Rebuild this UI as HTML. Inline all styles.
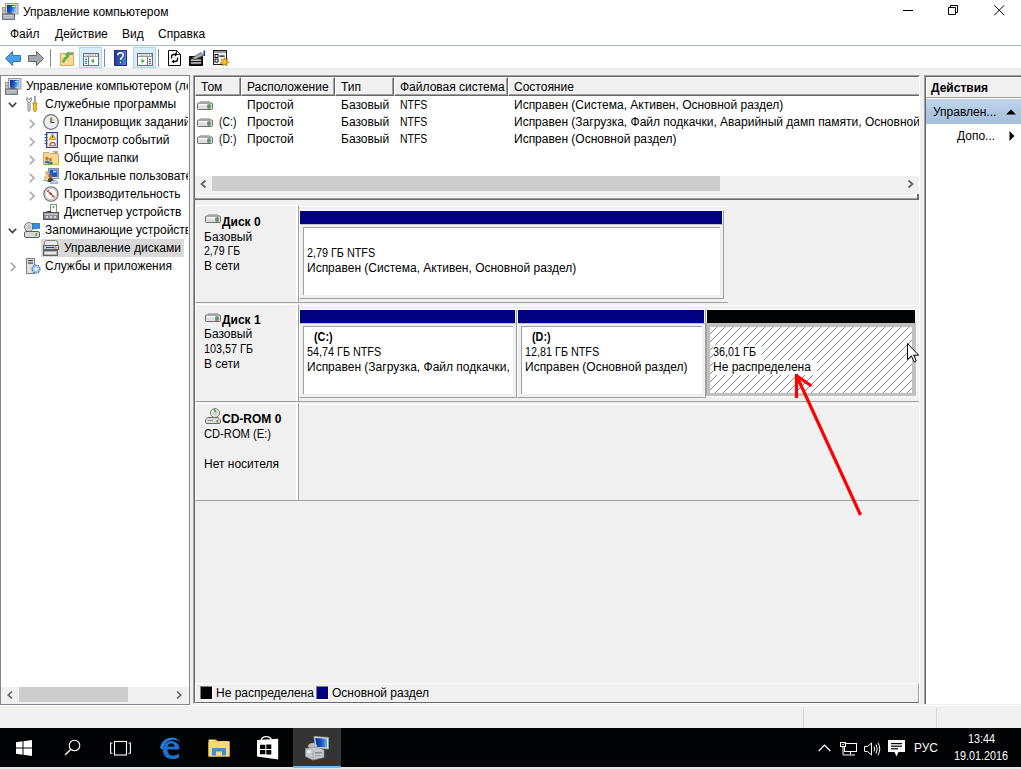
<!DOCTYPE html>
<html><head><meta charset="utf-8">
<style>
*{margin:0;padding:0;box-sizing:border-box}
html,body{width:1021px;height:769px;overflow:hidden;background:#f0f0f0;font-family:"Liberation Sans",sans-serif;font-size:12px;color:#000}
.a{position:absolute}
.t{position:absolute;white-space:nowrap;line-height:14px}
.b{font-weight:bold}
.n{transform:scaleX(0.9);transform-origin:0 0}
svg{position:absolute;overflow:visible}
.clip{position:absolute;overflow:hidden}
</style></head><body>
<!-- ============ TITLE BAR / MENU ============ -->
<div class="a" style="left:0;top:0;width:1021px;height:45px;background:#fff"></div>
<svg style="left:2px;top:3px" width="17" height="17" viewBox="0 0 17 17"><defs><linearGradient id="scrt" x1="0" y1="0" x2="1" y2="0.3"><stop offset="0" stop-color="#0a2a9a"/><stop offset="0.55" stop-color="#1a5ad0"/><stop offset="1" stop-color="#8cc8f8"/></linearGradient></defs>
 <rect x="3.5" y="0.5" width="12.5" height="10.5" fill="#dcdcdc" stroke="#9a9a9a"/>
 <rect x="5" y="2" width="9.5" height="7.5" fill="url(#scrt)"/>
 <rect x="10" y="3" width="3" height="1" fill="#e8f4ff"/>
 <rect x="0.5" y="4.5" width="3" height="7" fill="#c8c8c8" stroke="#8a8a8a" stroke-width="0.8"/>
 <rect x="1" y="7" width="1" height="1.2" fill="#e8c040"/><rect x="2" y="7" width="1" height="1.2" fill="#40c040"/>
 <path d="M4 10.5L6 9.5H10L11 10.5" fill="#302040"/>
 <rect x="0.5" y="11" width="12" height="5.5" fill="#9aa4ae" stroke="#5a5f66" stroke-width="0.8"/>
 <rect x="1.5" y="12.3" width="10" height="1" fill="#d8dce0"/><rect x="1.5" y="14.3" width="10" height="1" fill="#c8ccd0"/></svg>
<div class="t" style="left:23px;top:5px">Управление компьютером</div>
<div class="t" style="left:10px;top:27px">Файл</div>
<div class="t" style="left:55px;top:27px">Действие</div>
<div class="t" style="left:122px;top:27px">Вид</div>
<div class="t" style="left:158px;top:27px">Справка</div>
<!-- window controls -->
<div class="a" style="left:903px;top:10px;width:10px;height:1px;background:#000"></div>
<svg style="left:948px;top:5px" width="10" height="10" viewBox="0 0 10 10"><path d="M0.5 2.5h7v7h-7z M2.5 2.5v-2h7v7h-2" fill="none" stroke="#000"/></svg>
<svg style="left:994px;top:5px" width="11" height="11" viewBox="0 0 11 11"><path d="M0.3 0.3L10.2 10.2M10.2 0.3L0.3 10.2" stroke="#000" stroke-width="1"/></svg>

<!-- ============ TOOLBAR ============ -->
<div class="a" style="left:0;top:45px;width:1021px;height:1px;background:#b2b6b6"></div>
<div class="a" style="left:0;top:46px;width:1021px;height:22px;background:#fff"></div><div class="a" style="left:0;top:46px;width:1021px;height:1px;background:#f2fcfc"></div>
<div class="a" style="left:0;top:68px;width:1021px;height:1px;background:#e6e6e6"></div>
<!-- back -->
<svg style="left:5px;top:51px" width="16" height="15" viewBox="0 0 16 15"><path d="M0.5 7.5L7.5 0.5V4.5H15.5V10.5H7.5V14.5Z" fill="#4aa0e8" stroke="#2a78c8"/></svg>
<!-- forward -->
<svg style="left:28px;top:51px" width="16" height="15" viewBox="0 0 16 15"><path d="M15.5 7.5L8.5 0.5V4.5H0.5V10.5H8.5V14.5Z" fill="#a0a8b0" stroke="#606468"/></svg>
<div class="a" style="left:50px;top:49px;width:1px;height:18px;background:#8a8a8a"></div>
<!-- up folder -->
<svg style="left:60px;top:51px" width="15" height="16" viewBox="0 0 15 16"><path d="M0.5 2.5H13.5V14.5H0.5Z" fill="#fad88e" stroke="#c89a50" stroke-width="0.8"/><rect x="10" y="1" width="4" height="2" fill="#f0a040"/><rect x="10.5" y="2.5" width="2.5" height="1.2" fill="#3a8ae0"/><path d="M1 5H13" stroke="#fff0c0"/><path d="M2 11C3 8 4.5 6 6.5 5L5 3.5L8.5 0.5L11.5 4L9 4L9 6C7 7 5 9 4 11.5Z" fill="#4cbc3c" stroke="#8a8aa0" stroke-width="0.4"/></svg>
<!-- show/hide tree (highlighted) -->
<div class="a" style="left:79px;top:47px;width:23px;height:21px;background:#d8eefe;border:1px solid #a6d8fc"></div>
<svg style="left:83px;top:53px" width="16" height="13" viewBox="0 0 16 13"><rect x="0.5" y="0.5" width="15" height="12" fill="#f4f4f4" stroke="#707070"/><path d="M1 3.5H15" stroke="#9a9a9a"/><path d="M2 2H11" stroke="#b0b0b0"/><rect x="12" y="1.5" width="1" height="1" fill="#707070"/><rect x="14" y="1.5" width="1" height="1" fill="#707070"/><path d="M5.5 4V12" stroke="#707070"/><rect x="2" y="5.8" width="2" height="1.2" fill="#3a7ad8"/><rect x="2" y="7.8" width="2" height="1.2" fill="#3a7ad8"/><rect x="2" y="9.8" width="2" height="1.2" fill="#3a7ad8"/><rect x="6" y="4" width="9" height="8" fill="#fff"/><path d="M11 5.5L7.8 8L11 10.5Z" fill="#40b040"/></svg>
<div class="a" style="left:104px;top:49px;width:1px;height:18px;background:#8a8a8a"></div>
<!-- help -->
<svg style="left:114px;top:50px" width="13" height="16" viewBox="0 0 13 16"><defs><linearGradient id="hg" x1="0" x2="1"><stop offset="0" stop-color="#1a3a98"/><stop offset="1" stop-color="#4a8ae8"/></linearGradient></defs><rect x="0.5" y="0.5" width="12" height="15" fill="url(#hg)" stroke="#302a70"/><path d="M3.8 5.2C3.8 2.2 9.2 2.2 9.2 5.2C9.2 7.3 6.5 7.3 6.5 10" fill="none" stroke="#203070" stroke-width="3"/><path d="M3.8 5.2C3.8 2.2 9.2 2.2 9.2 5.2C9.2 7.3 6.5 7.3 6.5 10" fill="none" stroke="#fff" stroke-width="1.7"/><rect x="5.3" y="11.3" width="2.4" height="2.4" fill="#fff" stroke="#203070" stroke-width="0.6"/></svg>
<!-- show/hide action pane (highlighted) -->
<div class="a" style="left:133px;top:47px;width:23px;height:21px;background:#d8eefe;border:1px solid #a6d8fc"></div>
<svg style="left:137px;top:53px" width="16" height="13" viewBox="0 0 16 13"><rect x="0.5" y="0.5" width="15" height="12" fill="#f4f4f4" stroke="#707070"/><path d="M1 3.5H15" stroke="#9a9a9a"/><path d="M2 2H11" stroke="#b0b0b0"/><rect x="12" y="1.5" width="1" height="1" fill="#707070"/><rect x="14" y="1.5" width="1" height="1" fill="#707070"/><path d="M10.5 4V12" stroke="#707070"/><rect x="12" y="5.8" width="2" height="1.2" fill="#707070"/><rect x="12" y="7.8" width="2" height="1.2" fill="#707070"/><rect x="12" y="9.8" width="2" height="1.2" fill="#707070"/><rect x="1" y="4" width="9" height="8" fill="#fff"/><path d="M4.5 5.5L7.7 8L4.5 10.5Z" fill="#40b040"/></svg>
<div class="a" style="left:158px;top:49px;width:1px;height:18px;background:#8a8a8a"></div>
<!-- refresh doc -->
<svg style="left:168px;top:50px" width="13" height="16" viewBox="0 0 13 16"><path d="M0.5 0.5H8.5L12.5 4.5V15.5H0.5Z" fill="#fff" stroke="#000"/><path d="M8.5 0.5V4.5H12.5" fill="none" stroke="#000" stroke-width="0.8"/><path d="M3.5 8.5V6.5Q3.5 4.5 6 4.5H7.5" fill="none" stroke="#000" stroke-width="1.3"/><path d="M7 2.5L9.5 4.5L7 6.5Z" fill="#000"/><path d="M9.5 7.5V9.5Q9.5 11.5 7 11.5H5.5" fill="none" stroke="#000" stroke-width="1.3"/><path d="M6 9.5L3.5 11.5L6 13.5Z" fill="#000"/></svg>
<!-- export list -->
<svg style="left:189px;top:50px" width="17" height="16" viewBox="0 0 17 16"><path d="M0.5 6.5H13.5V15.5H0.5Z" fill="#181818" stroke="#000"/><rect x="2" y="9.5" width="10" height="1.3" fill="#e8e8e8"/><rect x="2" y="12.3" width="10" height="1.3" fill="#e8e8e8"/><path d="M3 8L12 2.5L14.5 5.5L6 9.5Z" fill="#a8acb0" stroke="#404040" stroke-width="0.7"/><rect x="14.5" y="0.5" width="1.6" height="5.5" fill="#1830c8"/></svg>
<!-- properties -->
<svg style="left:213px;top:50px" width="17" height="16" viewBox="0 0 17 16"><rect x="0.5" y="0.5" width="13" height="14" fill="#f0f0f0" stroke="#202020"/><rect x="1" y="1" width="12" height="2" fill="#9a9a9a"/><rect x="2" y="4.5" width="3" height="3" fill="#fff" stroke="#000" stroke-width="0.9"/><rect x="2" y="9" width="3" height="3" fill="#fff" stroke="#000" stroke-width="0.9"/><rect x="6.5" y="5.5" width="5" height="1.2" fill="#000"/><path d="M11.5 7.5L12.3 10L14.8 9L13.6 11.3L16.2 12.5L13.6 13.3L14.3 15.8L12 14.5L10.2 16L9.8 13.6L7.3 13L9.3 11.6L8.2 9.2L10.6 10.2Z" fill="#f8c818" stroke="#b06000" stroke-width="0.6"/></svg>

<!-- ============ LEFT TREE PANE ============ -->
<div class="a" style="left:0;top:75px;width:190px;height:630px;background:#fff;border:1px solid #828790"></div>
<div class="a" style="left:41px;top:239px;width:143px;height:18px;background:#d9d9d9"></div>
<div class="clip" style="left:1px;top:76px;width:187px;height:200px">
<div style="position:absolute;left:-1px;top:-76px;width:1021px;height:769px">
<!-- row 0 -->
<svg style="left:5px;top:78px" width="17" height="17" viewBox="0 0 17 17"><defs><linearGradient id="scrr" x1="0" y1="0" x2="1" y2="0.3"><stop offset="0" stop-color="#0a2a9a"/><stop offset="0.55" stop-color="#1a5ad0"/><stop offset="1" stop-color="#8cc8f8"/></linearGradient></defs>
 <rect x="3.5" y="0.5" width="12.5" height="10.5" fill="#dcdcdc" stroke="#9a9a9a"/>
 <rect x="5" y="2" width="9.5" height="7.5" fill="url(#scrr)"/>
 <rect x="10" y="3" width="3" height="1" fill="#e8f4ff"/>
 <rect x="0.5" y="4.5" width="3" height="7" fill="#c8c8c8" stroke="#8a8a8a" stroke-width="0.8"/>
 <rect x="1" y="7" width="1" height="1.2" fill="#e8c040"/><rect x="2" y="7" width="1" height="1.2" fill="#40c040"/>
 <path d="M4 10.5L6 9.5H10L11 10.5" fill="#302040"/>
 <rect x="0.5" y="11" width="12" height="5.5" fill="#9aa4ae" stroke="#5a5f66" stroke-width="0.8"/>
 <rect x="1.5" y="12.3" width="10" height="1" fill="#d8dce0"/><rect x="1.5" y="14.3" width="10" height="1" fill="#c8ccd0"/></svg>
<div class="t" style="left:26px;top:79px">Управление компьютером (локальным)</div>
<!-- row 1 -->
<svg style="left:8px;top:102px" width="9" height="6" viewBox="0 0 9 6"><path d="M0.8 0.8L4.5 4.5L8.2 0.8" fill="none" stroke="#3a3a3a" stroke-width="1.6"/></svg>
<svg style="left:26px;top:96px" width="12" height="16" viewBox="0 0 12 16"><path d="M1.2 1.5C0.3 3 0.6 5 2 5.8V14.2Q2 15.3 3 15.3Q4 15.3 4 14.2V5.8C5.6 5 5.8 3 5 1.5L3.9 3.2H2.3Z" fill="#eef0f2" stroke="#6a7078" stroke-width="0.9"/><rect x="8.3" y="0" width="1.3" height="7" fill="#707880"/><path d="M6.8 7H11V8.2H10.3V14.5Q10.3 15.5 9 15.5Q7.6 15.5 7.6 14.5V8.2H6.8Z" fill="#f8cc20" stroke="#d07800" stroke-width="0.8"/></svg>
<div class="t" style="left:45px;top:97px">Служебные программы</div>
<!-- row 2 -->
<svg style="left:29px;top:119px" width="6" height="10" viewBox="0 0 6 10"><path d="M0.8 0.8L5 5L0.8 9.2" fill="none" stroke="#a6a6a6" stroke-width="1.6"/></svg>
<svg style="left:43px;top:114px" width="16" height="16" viewBox="0 0 16 16"><circle cx="8" cy="8" r="7.3" fill="#e8eef4" stroke="#707070" stroke-width="1.2"/><path d="M8 8V3M8 8H11A3.5 3.5 0 0 0 8 3" fill="#f0d090"/><path d="M8 3.5V8.5H11.5" fill="none" stroke="#404040" stroke-width="1.1"/></svg>
<div class="t" style="left:64px;top:115px">Планировщик заданий</div>
<!-- row 3 -->
<svg style="left:29px;top:137px" width="6" height="10" viewBox="0 0 6 10"><path d="M0.8 0.8L5 5L0.8 9.2" fill="none" stroke="#a6a6a6" stroke-width="1.6"/></svg>
<svg style="left:43px;top:132px" width="16" height="16" viewBox="0 0 16 16"><rect x="3.5" y="0.5" width="11" height="15" fill="#eaf2fa" stroke="#284890"/><rect x="4.5" y="1.5" width="9" height="13" fill="#f4f8fc" stroke="#a8c0d8" stroke-width="0.6"/><g fill="#505a68"><rect x="1.5" y="2" width="3" height="1.2"/><rect x="1.5" y="5" width="3" height="1.2"/><rect x="1.5" y="8" width="3" height="1.2"/><rect x="1.5" y="11" width="3" height="1.2"/></g><path d="M9.5 1.5L13 7.5H6Z" fill="#f8c820" stroke="#a87000" stroke-width="0.6"/><rect x="9.1" y="3.5" width="0.9" height="2.2" fill="#402000"/><path d="M7 13A2.6 2.6 0 1 1 12.2 13" fill="none" stroke="#c83810" stroke-width="1.3"/><path d="M6 13.5H13" stroke="#e08030" stroke-width="1"/></svg>
<div class="t" style="left:64px;top:133px">Просмотр событий</div>
<!-- row 4 -->
<svg style="left:29px;top:155px" width="6" height="10" viewBox="0 0 6 10"><path d="M0.8 0.8L5 5L0.8 9.2" fill="none" stroke="#a6a6a6" stroke-width="1.6"/></svg>
<svg style="left:43px;top:150px" width="16" height="16" viewBox="0 0 16 16"><path d="M0.5 2.5H6L7 3.5H15.5V14.5H0.5Z" fill="#f6d890" stroke="#c89850" stroke-width="0.8"/><rect x="10" y="1" width="5" height="1.6" fill="#f0a040"/><rect x="12" y="2.2" width="2" height="1" fill="#3a8ae0"/><circle cx="4" cy="8.5" r="1.8" fill="#c07830"/><path d="M1.5 13Q1.5 10.5 4 10.5Q6.5 10.5 6.5 13Z" fill="#3a6cc0"/><circle cx="7.5" cy="9.5" r="1.8" fill="#d08840"/><path d="M5 14Q5 11.5 7.5 11.5Q10 11.5 10 14Z" fill="#3a78d0"/><path d="M2 15Q5 13 8 15" stroke="#40b040" stroke-width="1.2" fill="none"/></svg>
<div class="t" style="left:64px;top:151px">Общие папки</div>
<!-- row 5 -->
<svg style="left:29px;top:173px" width="6" height="10" viewBox="0 0 6 10"><path d="M0.8 0.8L5 5L0.8 9.2" fill="none" stroke="#a6a6a6" stroke-width="1.6"/></svg>
<svg style="left:43px;top:168px" width="16" height="16" viewBox="0 0 16 16"><rect x="5.5" y="0.5" width="10" height="10" fill="#d8e0e8" stroke="#8890a0"/><rect x="6.5" y="1.5" width="8" height="7.5" fill="#1a5ac8"/><rect x="10" y="2.5" width="3.5" height="2" fill="#a8d0f8"/><circle cx="4" cy="5" r="2" fill="#e0b070"/><path d="M1 10Q1 7 4 7Q7 7 7 10V11H1Z" fill="#e8c890"/><circle cx="7.5" cy="8" r="2" fill="#a06030"/><path d="M4.5 13Q4.5 10 7.5 10Q10.5 10 10.5 13V14H4.5Z" fill="#504038"/><path d="M7 15.5Q9 11.5 13 12.5Q15.5 13.5 15 15.5Z" fill="#b8d0e8" stroke="#7890b0" stroke-width="0.6"/><path d="M0.5 13Q2 11 4 13" stroke="#40b040" stroke-width="1.2" fill="none"/></svg>
<div class="t" style="left:64px;top:169px">Локальные пользователи и группы</div>
<!-- row 6 -->
<svg style="left:29px;top:191px" width="6" height="10" viewBox="0 0 6 10"><path d="M0.8 0.8L5 5L0.8 9.2" fill="none" stroke="#a6a6a6" stroke-width="1.6"/></svg>
<svg style="left:43px;top:186px" width="16" height="16" viewBox="0 0 16 16"><circle cx="8" cy="8" r="7.2" fill="#e4e4e4" stroke="#6a6a6a" stroke-width="1.1"/><circle cx="8" cy="8" r="5.6" fill="#fafafa" stroke="#b0b0b0" stroke-width="0.6"/><path d="M4.5 4.5L11.5 11.5" stroke="#e01818" stroke-width="1.8" stroke-dasharray="1.6 0.7"/><circle cx="8" cy="8" r="1" fill="#505050"/></svg>
<div class="t" style="left:64px;top:187px">Производительность</div>
<!-- row 7 -->
<svg style="left:43px;top:204px" width="16" height="16" viewBox="0 0 16 16"><rect x="7.5" y="0.5" width="6" height="8" fill="#fafafa" stroke="#8a8a8a"/><circle cx="10.5" cy="3" r="1.1" fill="#30c030"/><path d="M2.5 9Q2.5 7 6 7H8V9Z" fill="#303030"/><rect x="0.5" y="8.5" width="15" height="7" fill="#8c9094" stroke="#505458"/><rect x="1.5" y="9.5" width="13" height="1.5" fill="#c0c4c8"/><g fill="#d8dcdf"><rect x="3" y="12" width="2" height="2"/><rect x="7" y="12" width="2" height="2"/><rect x="11" y="12" width="2" height="2"/></g></svg>
<div class="t" style="left:64px;top:205px">Диспетчер устройств</div>
<!-- row 8 -->
<svg style="left:8px;top:228px" width="9" height="6" viewBox="0 0 9 6"><path d="M0.8 0.8L4.5 4.5L8.2 0.8" fill="none" stroke="#3a3a3a" stroke-width="1.6"/></svg>
<svg style="left:24px;top:222px" width="16" height="16" viewBox="0 0 16 16"><circle cx="5" cy="5" r="4.5" fill="#d8d8d8" stroke="#808080"/><circle cx="5" cy="5" r="1.2" fill="#fff" stroke="#808080" stroke-width="0.6"/><rect x="8.5" y="1.5" width="7" height="5" fill="#3890e0" stroke="#2060a0" stroke-width="0.7"/><rect x="0.5" y="9.5" width="15" height="6" rx="1.5" fill="#d8d8d8" stroke="#606060"/><rect x="11.5" y="11" width="1.5" height="3" fill="#30b030"/></svg>
<div class="t" style="left:45px;top:223px">Запоминающие устройства</div>
<!-- row 9 -->
<svg style="left:43px;top:240px" width="16" height="16" viewBox="0 0 16 16"><rect x="1.5" y="0.5" width="13" height="6" rx="2" fill="#e8e8e8" stroke="#808080"/><rect x="0.5" y="5.5" width="15" height="4" fill="#c8c8c8" stroke="#606060"/><rect x="3" y="7" width="8" height="1" fill="#1840c0"/><circle cx="12.5" cy="7.5" r="1" fill="#e08020"/><rect x="0.5" y="10.5" width="14" height="5" fill="#b0b0b0" stroke="#606060"/><rect x="2" y="12" width="11" height="2" fill="#e8e8e8"/></svg>
<div class="t" style="left:64px;top:241px">Управление дисками</div>
<!-- row 10 -->
<svg style="left:10px;top:262px" width="6" height="10" viewBox="0 0 6 10"><path d="M0.8 0.8L5 5L0.8 9.2" fill="none" stroke="#a6a6a6" stroke-width="1.6"/></svg>
<svg style="left:26px;top:258px" width="15" height="16" viewBox="0 0 15 16"><rect x="0.5" y="0.5" width="8" height="15" fill="#e0e0e0" stroke="#808080"/><rect x="2" y="2" width="5" height="1.2" fill="#404040"/><rect x="2" y="4.5" width="5" height="1.2" fill="#404040"/><circle cx="10" cy="11" r="4" fill="#a8c8f0" stroke="#4070b0" stroke-width="1.2" stroke-dasharray="1.5 1"/><circle cx="10" cy="11" r="1.5" fill="#fff"/></svg>
<div class="t" style="left:45px;top:259px">Службы и приложения</div>
</div></div>
<!-- tree scrollbar -->
<div class="a" style="left:1px;top:687px;width:188px;height:17px;background:#f0f0f0"></div>
<div class="a" style="left:19px;top:687px;width:109px;height:15px;background:#cdcdcd"></div>
<svg style="left:7px;top:691px" width="6" height="8" viewBox="0 0 6 8"><path d="M5 0.5L1.2 4L5 7.5" fill="none" stroke="#606060" stroke-width="1.6"/></svg>
<svg style="left:176px;top:691px" width="6" height="8" viewBox="0 0 6 8"><path d="M1 0.5L4.8 4L1 7.5" fill="none" stroke="#606060" stroke-width="1.6"/></svg>


<!-- ============ CENTER PANE ============ -->
<!-- center pane frame -->
<div class="a" style="left:193px;top:75px;width:727px;height:629px;background:#f0f0f0;border-top:1px solid #a0a0a0;border-left:1px solid #a0a0a0;border-right:1px solid #fff;border-bottom:1px solid #fff"></div>
<div class="a" style="left:194px;top:76px;width:725px;height:627px;border-top:1px solid #696969;border-left:1px solid #696969"></div>
<!-- list view -->
<div class="a" style="left:195px;top:96px;width:724px;height:80px;background:#fff"></div>
<div class="clip" style="left:195px;top:77px;width:724px;height:99px">
 <div style="position:absolute;left:-195px;top:-77px;width:1021px;height:769px">
  <div class="a" style="left:195px;top:77px;width:46px;height:19px;border-top:1px solid #fff;border-left:1px solid #fff;border-right:1px solid #696969;border-bottom:1px solid #696969;box-shadow:inset -1px -1px #a0a0a0"></div>
  <div class="a" style="left:241px;top:77px;width:94px;height:19px;border-top:1px solid #fff;border-left:1px solid #fff;border-right:1px solid #696969;border-bottom:1px solid #696969;box-shadow:inset -1px -1px #a0a0a0"></div>
  <div class="a" style="left:335px;top:77px;width:59px;height:19px;border-top:1px solid #fff;border-left:1px solid #fff;border-right:1px solid #696969;border-bottom:1px solid #696969;box-shadow:inset -1px -1px #a0a0a0"></div>
  <div class="a" style="left:394px;top:77px;width:114px;height:19px;border-top:1px solid #fff;border-left:1px solid #fff;border-right:1px solid #696969;border-bottom:1px solid #696969;box-shadow:inset -1px -1px #a0a0a0"></div>
  <div class="a" style="left:508px;top:77px;width:600px;height:19px;border-top:1px solid #fff;border-left:1px solid #fff;border-right:1px solid #696969;border-bottom:1px solid #696969;box-shadow:inset -1px -1px #a0a0a0"></div>
  <div class="t" style="left:201px;top:80px">Том</div>
  <div class="t" style="left:247px;top:80px">Расположение</div>
  <div class="t" style="left:341px;top:80px">Тип</div>
  <div class="t" style="left:400px;top:80px">Файловая система</div>
  <div class="t" style="left:514px;top:80px">Состояние</div>
  <!-- rows -->
  <svg style="left:197px;top:101px" width="16" height="9" viewBox="0 0 16 9"><path d="M3 0.5H13" stroke="#b8b8b8"/><path d="M2 1.5H14" stroke="#d8d8d8"/><rect x="0.5" y="2" width="15" height="6.5" rx="0.8" fill="#dedede" stroke="#6e6e6e"/><rect x="1.5" y="3" width="10" height="1.3" fill="#fafafa"/><rect x="10.5" y="3.5" width="3" height="4" fill="#504060"/><rect x="11.2" y="4" width="1.6" height="3" fill="#40c840"/></svg>
  <div class="t" style="left:247px;top:98px">Простой</div>
  <div class="t" style="left:341px;top:98px">Базовый</div>
  <div class="t n" style="left:400px;top:98px;transform:scaleX(0.87)">NTFS</div>
  <div class="t" style="left:514px;top:98px">Исправен (Система, Активен, Основной раздел)</div>
  <svg style="left:197px;top:118px" width="16" height="9" viewBox="0 0 16 9"><path d="M3 0.5H13" stroke="#b8b8b8"/><path d="M2 1.5H14" stroke="#d8d8d8"/><rect x="0.5" y="2" width="15" height="6.5" rx="0.8" fill="#dedede" stroke="#6e6e6e"/><rect x="1.5" y="3" width="10" height="1.3" fill="#fafafa"/><rect x="10.5" y="3.5" width="3" height="4" fill="#504060"/><rect x="11.2" y="4" width="1.6" height="3" fill="#40c840"/></svg>
  <div class="t n" style="left:219px;top:115px;transform:scaleX(0.87)">(C:)</div>
  <div class="t" style="left:247px;top:115px">Простой</div>
  <div class="t" style="left:341px;top:115px">Базовый</div>
  <div class="t n" style="left:400px;top:115px;transform:scaleX(0.87)">NTFS</div>
  <div class="t" style="left:514px;top:115px">Исправен (Загрузка, Файл подкачки, Аварийный дамп памяти, Основной раздел)</div>
  <svg style="left:197px;top:135px" width="16" height="9" viewBox="0 0 16 9"><path d="M3 0.5H13" stroke="#b8b8b8"/><path d="M2 1.5H14" stroke="#d8d8d8"/><rect x="0.5" y="2" width="15" height="6.5" rx="0.8" fill="#dedede" stroke="#6e6e6e"/><rect x="1.5" y="3" width="10" height="1.3" fill="#fafafa"/><rect x="10.5" y="3.5" width="3" height="4" fill="#504060"/><rect x="11.2" y="4" width="1.6" height="3" fill="#40c840"/></svg>
  <div class="t n" style="left:219px;top:132px;transform:scaleX(0.87)">(D:)</div>
  <div class="t" style="left:247px;top:132px">Простой</div>
  <div class="t" style="left:341px;top:132px">Базовый</div>
  <div class="t n" style="left:400px;top:132px;transform:scaleX(0.87)">NTFS</div>
  <div class="t" style="left:514px;top:132px">Исправен (Основной раздел)</div>
 </div>
</div>
<!-- list hscroll -->
<div class="a" style="left:212px;top:176px;width:508px;height:15px;background:#cdcdcd"></div>
<svg style="left:200px;top:180px" width="7" height="8" viewBox="0 0 7 8"><path d="M5.5 0.5L1.5 4L5.5 7.5" fill="none" stroke="#606060" stroke-width="1.7"/></svg>
<svg style="left:907px;top:180px" width="7" height="8" viewBox="0 0 7 8"><path d="M1.5 0.5L5.5 4L1.5 7.5" fill="none" stroke="#606060" stroke-width="1.7"/></svg>
<!-- list bottom edge -->
<div class="a" style="left:196px;top:195px;width:722px;height:1px;background:#fff"></div>
<div class="a" style="left:195px;top:198px;width:724px;height:1px;background:#a0a0a0"></div><div class="a" style="left:195px;top:199px;width:724px;height:1px;background:#696969"></div>
<div class="a" style="left:917px;top:194px;width:2px;height:5px;background:#6d6d6d"></div>

<!--DISKS--><div class="clip" style="left:195px;top:200px;width:724px;height:483px">
<div style="position:absolute;left:-195px;top:-200px;width:1021px;height:769px">
<div class="a" style="left:195px;top:205px;width:104px;height:98px;border-top:1px solid #fff;border-left:1px solid #fff;border-right:1px solid #a0a0a0;border-bottom:1px solid #a0a0a0"></div>
<div class="a" style="left:299px;top:206px;width:429px;height:97px;border-top:1px solid #fff;border-bottom:1px solid #a0a0a0"></div>
<div class="a" style="left:296px;top:206px;width:2px;height:96px;background:#fff"></div>
<svg style="left:205px;top:214px" width="16" height="9" viewBox="0 0 16 9"><path d="M3 0.5H13" stroke="#b8b8b8"/><path d="M2 1.5H14" stroke="#d8d8d8"/><rect x="0.5" y="2" width="15" height="6.5" rx="0.8" fill="#dedede" stroke="#6e6e6e"/><rect x="1.5" y="3" width="10" height="1.3" fill="#fafafa"/><rect x="10.5" y="3.5" width="3" height="4" fill="#504060"/><rect x="11.2" y="4" width="1.6" height="3" fill="#40c840"/></svg>
<div class="t b" style="left:222px;top:215px;">Диск 0</div>
<div class="t" style="left:204px;top:230px;transform:scaleX(1);transform-origin:0 0">Базовый</div>
<div class="t" style="left:204px;top:244px;transform:scaleX(0.88);transform-origin:0 0">2,79 ГБ</div>
<div class="t" style="left:204px;top:259px;transform:scaleX(1);transform-origin:0 0">В сети</div>
<div class="a" style="left:195px;top:304px;width:104px;height:98px;border-top:1px solid #fff;border-left:1px solid #fff;border-right:1px solid #a0a0a0;border-bottom:1px solid #a0a0a0"></div>
<div class="a" style="left:299px;top:305px;width:700px;height:97px;border-top:1px solid #fff;border-bottom:1px solid #a0a0a0"></div>
<div class="a" style="left:296px;top:305px;width:2px;height:96px;background:#fff"></div>
<svg style="left:205px;top:313px" width="16" height="9" viewBox="0 0 16 9"><path d="M3 0.5H13" stroke="#b8b8b8"/><path d="M2 1.5H14" stroke="#d8d8d8"/><rect x="0.5" y="2" width="15" height="6.5" rx="0.8" fill="#dedede" stroke="#6e6e6e"/><rect x="1.5" y="3" width="10" height="1.3" fill="#fafafa"/><rect x="10.5" y="3.5" width="3" height="4" fill="#504060"/><rect x="11.2" y="4" width="1.6" height="3" fill="#40c840"/></svg>
<div class="t b" style="left:222px;top:313px;">Диск 1</div>
<div class="t" style="left:204px;top:327px;transform:scaleX(1);transform-origin:0 0">Базовый</div>
<div class="t" style="left:204px;top:342px;transform:scaleX(0.9);transform-origin:0 0">103,57 ГБ</div>
<div class="t" style="left:204px;top:357px;transform:scaleX(1);transform-origin:0 0">В сети</div>
<div class="a" style="left:195px;top:403px;width:104px;height:98px;border-top:1px solid #fff;border-left:1px solid #fff;border-right:1px solid #a0a0a0;border-bottom:1px solid #a0a0a0"></div>
<div class="a" style="left:299px;top:404px;width:700px;height:97px;border-top:1px solid #fff;border-bottom:1px solid #a0a0a0"></div>
<div class="a" style="left:296px;top:404px;width:2px;height:96px;background:#fff"></div>
<svg style="left:205px;top:408px" width="16" height="16" viewBox="0 0 16 16"><circle cx="10" cy="5" r="4.5" fill="#e0e8e0" stroke="#808080"/><circle cx="10" cy="5" r="1.2" fill="#fff" stroke="#909090" stroke-width="0.6"/><path d="M9 1L11 4" stroke="#40b040" stroke-width="1.5"/><path d="M2 10.5Q2 9.5 4 9.5H12Q14 9.5 14 10.5L15.5 12V14Q15.5 15.5 14 15.5H2Q0.5 15.5 0.5 14V12Z" fill="#dcdcdc" stroke="#6a6a6a"/><rect x="3" y="12" width="5" height="1" fill="#909090"/><rect x="11.5" y="12" width="1.8" height="2.5" fill="#30b030"/></svg>
<div class="t b" style="left:222px;top:412px;">CD-ROM 0</div>
<div class="t" style="left:204px;top:427px;transform:scaleX(0.93);transform-origin:0 0">CD-ROM (E:)</div>
<div class="t" style="left:204px;top:457px;transform:scaleX(1);transform-origin:0 0">Нет носителя</div>
<div class="a" style="left:299px;top:210px;width:425px;height:89px;border-top:1px solid #fff;border-left:1px solid #fff;border-right:1px solid #a0a0a0;border-bottom:1px solid #a0a0a0"></div>
<div class="a" style="left:300px;top:211px;width:422px;height:13px;background:#000080"></div>
<div class="a" style="left:300px;top:224px;width:423px;height:1px;background:#c4c4c4"></div>
<div class="a" style="left:303px;top:227px;width:417px;height:68px;background:#fff;border-top:1px solid #a0a0a0;border-left:1px solid #a0a0a0"></div>
<div class="clip" style="left:304px;top:228px;width:415px;height:66px">
<div class="t" style="left:3px;top:18px;transform:scaleX(0.9);transform-origin:0 0">2,79 ГБ NTFS</div>
<div class="t" style="left:3px;top:33px;">Исправен (Система, Активен, Основной раздел)</div>
</div>
<div class="a" style="left:299px;top:309px;width:218px;height:89px;border-top:1px solid #fff;border-left:1px solid #fff;border-right:1px solid #a0a0a0;border-bottom:1px solid #a0a0a0"></div>
<div class="a" style="left:300px;top:310px;width:215px;height:13px;background:#000080"></div>
<div class="a" style="left:300px;top:323px;width:216px;height:1px;background:#c4c4c4"></div>
<div class="a" style="left:303px;top:326px;width:210px;height:68px;background:#fff;border-top:1px solid #a0a0a0;border-left:1px solid #a0a0a0"></div>
<div class="clip" style="left:304px;top:327px;width:208px;height:66px">
<div class="t b" style="left:10px;top:3px;transform:scaleX(0.9);transform-origin:0 0">(C:)</div>
<div class="t" style="left:3px;top:18px;transform:scaleX(0.9);transform-origin:0 0">54,74 ГБ NTFS</div>
<div class="t" style="left:3px;top:33px;">Исправен (Загрузка, Файл подкачки, Аварийный дамп памяти, Основной раздел)</div>
</div>
<div class="a" style="left:517px;top:309px;width:189px;height:89px;border-top:1px solid #fff;border-left:1px solid #fff;border-right:1px solid #a0a0a0;border-bottom:1px solid #a0a0a0"></div>
<div class="a" style="left:518px;top:310px;width:186px;height:13px;background:#000080"></div>
<div class="a" style="left:518px;top:323px;width:187px;height:1px;background:#c4c4c4"></div>
<div class="a" style="left:521px;top:326px;width:181px;height:68px;background:#fff;border-top:1px solid #a0a0a0;border-left:1px solid #a0a0a0"></div>
<div class="clip" style="left:522px;top:327px;width:179px;height:66px">
<div class="t b" style="left:10px;top:3px;transform:scaleX(0.9);transform-origin:0 0">(D:)</div>
<div class="t" style="left:3px;top:18px;transform:scaleX(0.9);transform-origin:0 0">12,81 ГБ NTFS</div>
<div class="t" style="left:3px;top:33px;">Исправен (Основной раздел)</div>
</div>
<div class="a" style="left:706px;top:309px;width:211px;height:89px;border-top:1px solid #fff;border-left:1px solid #fff;border-right:1px solid #a0a0a0;border-bottom:1px solid #a0a0a0"></div>
<div class="a" style="left:707px;top:310px;width:208px;height:13px;background:#020305"></div>
<div class="a" style="left:707px;top:323px;width:209px;height:1px;background:#c4c4c4"></div>
<div class="a" style="left:706px;top:323px;width:210px;height:74px;background:#c0c0c0;border-left:1px solid #a8a8a8"></div>
<svg style="left:710px;top:327px" width="202" height="66" shape-rendering="crispEdges"><defs><pattern id="hp706" patternUnits="userSpaceOnUse" width="8" height="8" x="-6" y="-7"><rect x="0" y="3" width="1" height="1" fill="#8a8a8a"/><rect x="1" y="2" width="1" height="1" fill="#8a8a8a"/><rect x="2" y="1" width="1" height="1" fill="#8a8a8a"/><rect x="3" y="0" width="1" height="1" fill="#8a8a8a"/><rect x="4" y="7" width="1" height="1" fill="#8a8a8a"/><rect x="5" y="6" width="1" height="1" fill="#8a8a8a"/><rect x="6" y="5" width="1" height="1" fill="#8a8a8a"/><rect x="7" y="4" width="1" height="1" fill="#8a8a8a"/></pattern></defs><rect width="202" height="66" fill="#fff"/><rect width="202" height="66" fill="url(#hp706)" style="fill:url(#hp706)"/></svg>
<div class="clip" style="left:710px;top:327px;width:202px;height:66px">
<div class="t" style="left:3px;top:18px;background:#fff;padding-right:6px;padding-bottom:1px;transform:scaleX(0.9);transform-origin:0 0">36,01 ГБ</div>
<div class="t" style="left:3px;top:33px;background:#fff;padding-right:6px;padding-bottom:1px">Не распределена</div>
</div>
<div class="a" style="left:916px;top:308px;width:1px;height:90px;background:#fff"></div>
<div class="a" style="left:706px;top:397px;width:211px;height:1px;background:#f0f0f0"></div>
<div class="a" style="left:706px;top:396px;width:211px;height:1px;background:#fff"></div>
</div></div>
<div class="a" style="left:195px;top:683px;width:724px;height:20px;border-top:1px solid #fff;border-left:1px solid #fff;border-bottom:1px solid #696969;border-right:1px solid #a0a0a0"></div>
<div class="a" style="left:200px;top:686px;width:12px;height:13px;background:#020305;border-top:1px solid #808080;border-left:1px solid #808080;box-shadow:1px 1px #fff"></div>
<div class="t" style="left:216px;top:686px;">Не распределена</div>
<div class="a" style="left:316px;top:686px;width:12px;height:13px;background:#000080;border-top:1px solid #808080;border-left:1px solid #808080;box-shadow:1px 1px #fff"></div>
<div class="t" style="left:332px;top:686px;">Основной раздел</div><!--/DISKS-->

<!-- ============ ACTIONS PANE ============ -->
<div class="a" style="left:924px;top:75px;width:97px;height:629px;background:#fff;border-top:1px solid #a0a0a0;border-left:1px solid #a0a0a0"></div>
<div class="a" style="left:925px;top:76px;width:96px;height:628px;border-top:1px solid #696969;border-left:1px solid #696969"></div>
<div class="a" style="left:926px;top:77px;width:95px;height:21px;background:#f0f0f0;border-top:1px solid #fff;border-left:1px solid #fff;border-bottom:1px solid #a0a0a0"></div>
<div class="t b" style="left:931px;top:81px">Действия</div>
<div class="a" style="left:926px;top:99px;width:95px;height:25px;background:linear-gradient(#c2d8ee,#b0c8e2 50%,#a6c0dc)"></div>
<div class="t" style="left:933px;top:105px">Управлен...</div>
<svg style="left:1006px;top:109px" width="10" height="6" viewBox="0 0 10 6"><path d="M0 5.5L5 0.5L10 5.5Z" fill="#000"/></svg>
<div class="t" style="left:957px;top:129px">Допо...</div>
<svg style="left:1009px;top:131px" width="6" height="10" viewBox="0 0 6 10"><path d="M0.5 0L5.5 5L0.5 10Z" fill="#000"/></svg>


<!-- ============ STATUS BAR ============ -->
<div class="a" style="left:0;top:705px;width:1021px;height:1px;background:#fff"></div>
<div class="a" style="left:803px;top:708px;width:1px;height:20px;background:#d6d6d6"></div>
<div class="a" style="left:936px;top:708px;width:1px;height:20px;background:#d6d6d6"></div>

<!-- ============ TASKBAR ============ -->
<div class="a" style="left:0;top:728px;width:1021px;height:39px;background:#020305"></div>
<div class="a" style="left:0;top:767px;width:1021px;height:2px;background:#e8e8e8"></div>
<!--OVERLAY--><!-- red arrow -->
<svg style="left:0;top:0" width="1021" height="769" viewBox="0 0 1021 769"><g stroke="#ff0000" stroke-width="3.2" fill="none" stroke-linecap="butt"><path d="M796.5 375.5L860.5 515"/><path d="M796.5 374V398"/><path d="M795.5 375L811.5 386"/></g></svg>
<!-- mouse cursor -->
<svg style="left:907px;top:343px" width="13" height="20" viewBox="0 0 13 20"><path d="M0.5 0.5V16.5L4.3 12.9L7.2 19L9.3 18L6.6 12.2H11.7Z" fill="#fff" stroke="#000" stroke-width="1" stroke-linejoin="miter"/></svg>
<!-- ============ TASKBAR ICONS ============ -->
<!-- start -->
<svg style="left:16px;top:740px" width="16" height="16" viewBox="0 0 16 16"><path d="M0 2.2L6.5 1.3V7.5H0Z M7.5 1.15L16 0V7.5H7.5Z M0 8.5H6.5V14.7L0 13.8Z M7.5 8.5H16V16L7.5 14.85Z" fill="#fff"/></svg>
<!-- search -->
<svg style="left:64px;top:739px" width="17" height="17" viewBox="0 0 17 17"><circle cx="10.5" cy="6.5" r="5.3" fill="none" stroke="#fff" stroke-width="1.1"/><path d="M6.8 10.2L1 16" stroke="#fff" stroke-width="1.3"/></svg>
<!-- task view -->
<svg style="left:110px;top:741px" width="21" height="15" viewBox="0 0 21 15"><rect x="4.5" y="0.5" width="12" height="13.5" fill="none" stroke="#fff" stroke-width="1.1"/><path d="M2.5 2H0.6V12.3H2.5 M18.5 2H20.4V12.3H18.5" fill="none" stroke="#fff" stroke-width="1.1"/></svg>
<!-- edge -->
<svg style="left:160px;top:737px" width="21" height="22" viewBox="0 0 21 22"><path d="M3 13.5C3 7 8 3.5 12 4C17 4.5 19.5 8 19.5 12.5H7.5C7.5 16.5 10 18.5 13 18.5C15.5 18.5 17.5 17.5 19 16.5V20.5C17 21.5 15 22 12.5 22C6.5 22 3 18.5 3 13.5Z M7.6 9.5H14.5C14.5 7.5 13 6.5 11 6.5C9 6.5 8 7.8 7.6 9.5Z" fill="#1d6fd0" fill-rule="evenodd"/><path d="M0 11C1 5 6 0.5 12 0.5C16 0.5 19 2.5 20.5 5.5C18 3 14.5 2.5 11.5 3C6 4 3 9 3 13Z" fill="#2a7ad8"/></svg>
<!-- explorer -->
<svg style="left:208px;top:739px" width="22" height="18" viewBox="0 0 22 18"><path d="M0.5 0.5H8L9.5 2H21.5V17.5H0.5Z" fill="#f5c94a"/><rect x="0.5" y="3" width="21" height="14.5" fill="#f8d878"/><rect x="1" y="1" width="5" height="1.2" fill="#fff3c0"/><path d="M4 9H18V16.5H14V12.5H8V16.5H4Z" fill="#3f8fd8"/></svg>
<!-- store -->
<svg style="left:257px;top:736px" width="22" height="24" viewBox="0 0 22 24"><path d="M4.2 4.5Q4.5 0.6 9.2 0.6Q13.6 0.6 14.2 3.8" fill="none" stroke="#fff" stroke-width="1.4"/><path d="M0 4L21.2 2.8V23.6L0 20.6Z" fill="#fff"/><path d="M3 8.8H8.3V13H3Z M9.3 8.6H14.3V13H9.3Z M3 14H8.3V18.2H3Z M9.3 14H14.3V18.6H9.3Z" fill="#000"/></svg>
<!-- active app -->
<div class="a" style="left:293px;top:728px;width:48px;height:38px;background:#343434"></div>
<div class="a" style="left:293px;top:766px;width:48px;height:2px;background:#76b9ed"></div>
<svg style="left:305px;top:736px" width="24" height="25" viewBox="0 0 24 25"><defs><linearGradient id="ag" x1="0" x2="1"><stop offset="0" stop-color="#0a2a98"/><stop offset="0.5" stop-color="#1850c0"/><stop offset="1" stop-color="#70b0e8"/></linearGradient></defs><path d="M9 0.5L23.5 1.5V13L10.5 12Z" fill="#dde4ea" stroke="#9aa2aa" stroke-width="0.8"/><path d="M10.3 2L22 2.8V11.6L11.4 10.8Z" fill="url(#ag)"/><path d="M3 10Q4 6.5 9 7L12 9V12L4 12Z" fill="#b8bcc0"/><path d="M0.5 12.5L12 11L19 14V21.5L8 24L0.5 20.5Z" fill="#c4c8cc" stroke="#8a8e92" stroke-width="0.7"/><path d="M8 14.5V23.5" stroke="#9a9ea2" stroke-width="0.7"/><rect x="2" y="14.5" width="4" height="2.5" fill="#e8ecef"/><rect x="10" y="16" width="7" height="1.5" fill="#8a8e92"/><rect x="10" y="19" width="6" height="1.2" fill="#a0a4a8"/></svg>
<!-- tray -->
<svg style="left:818px;top:744px" width="13" height="8" viewBox="0 0 13 8"><path d="M0.7 7L6.5 1.2L12.3 7" fill="none" stroke="#fff" stroke-width="1.2"/></svg>
<svg style="left:840px;top:742px" width="17" height="14" viewBox="0 0 17 14"><rect x="4.5" y="1.5" width="12" height="8" fill="none" stroke="#fff" stroke-width="1"/><rect x="0.5" y="0.5" width="5" height="4" fill="#000" stroke="#fff" stroke-width="1"/><path d="M2 2L3 3L4.5 1.2" stroke="#fff" stroke-width="0.8" fill="none"/><path d="M10.5 9.5V12.5M6 13H15M3 4.5V13H6" stroke="#fff" stroke-width="1" fill="none"/></svg>
<svg style="left:864px;top:742px" width="17" height="14" viewBox="0 0 17 14"><path d="M0.5 4.5H3.5L7.5 1V13L3.5 9.5H0.5Z" fill="none" stroke="#fff" stroke-width="1"/><path d="M10 4.5Q11.5 7 10 9.5M12 2.5Q14.5 7 12 11.5M14 0.8Q17.5 7 14 13.2" fill="none" stroke="#fff" stroke-width="1"/></svg>
<svg style="left:888px;top:740px" width="17" height="17" viewBox="0 0 17 17"><path d="M0 0H17V12H10.5L8.5 16.5L6.5 12H0Z" fill="#fff"/><rect x="3" y="3" width="11" height="1.2" fill="#000"/><rect x="3" y="5.6" width="11" height="1.2" fill="#000"/><rect x="3" y="8.2" width="7" height="1.2" fill="#000"/></svg>
<div class="t" style="left:914px;top:741px;color:#fff;font-size:12px;transform:scaleX(0.99);transform-origin:0 0">РУС</div>
<div class="t" style="left:968px;top:732px;color:#fff;font-size:12px;transform:scaleX(0.9);transform-origin:0 0">13:44</div>
<div class="t" style="left:954px;top:749px;color:#fff;font-size:12px;transform:scaleX(0.9);transform-origin:0 0">19.01.2016</div>
<!--/OVERLAY-->
</body></html>
